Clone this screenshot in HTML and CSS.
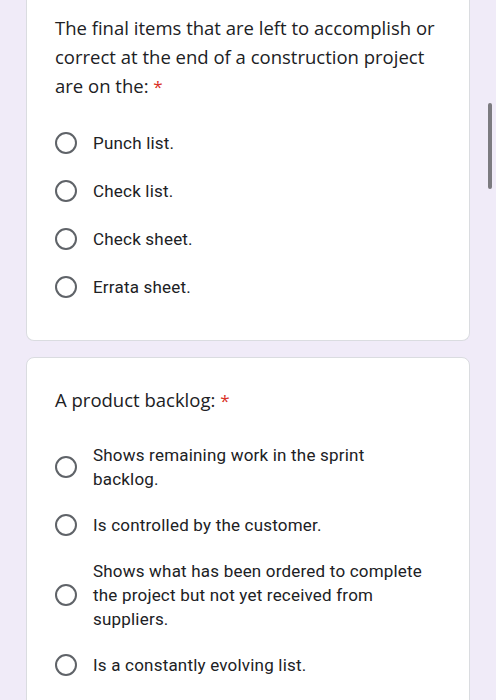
FILE: index.html
```html
<!DOCTYPE html>
<html lang="en">
<head>
    <meta charset="UTF-8">
    <meta name="viewport" content="width=device-width, initial-scale=1.0">
    <title>Quiz</title>

    <link rel="stylesheet" href="styles.css">

</head>
<body>

    <div class="page">
        <!-- Question 1 (scrolled, top of card is cut off) -->
        <div class="card card-cut">
            <div class="question">
                The final items that are left to accomplish or correct at the end of a construction project are on the: <span class="required">*</span>
            </div>
            <div class="options">
                <label class="option"><span class="radio"></span><span class="option-text">Punch list.</span></label>
                <label class="option"><span class="radio"></span><span class="option-text">Check list.</span></label>
                <label class="option"><span class="radio"></span><span class="option-text">Check sheet.</span></label>
                <label class="option"><span class="radio"></span><span class="option-text">Errata sheet.</span></label>
            </div>
        </div>

        <!-- Question 2 -->
        <div class="card">
            <div class="question">
                A product backlog: <span class="required">*</span>
            </div>
            <div class="options">
                <label class="option"><span class="radio"></span><span class="option-text">Shows remaining work in the sprint backlog.</span></label>
                <label class="option"><span class="radio"></span><span class="option-text">Is controlled by the customer.</span></label>
                <label class="option"><span class="radio"></span><span class="option-text">Shows what has been ordered to complete the project but not yet received from suppliers.</span></label>
                <label class="option"><span class="radio"></span><span class="option-text">Is a constantly evolving list.</span></label>
            </div>
        </div>
    </div>

    <div class="scrollbar"></div>

</body>
</html>
```

FILE: styles.css
```css
* {
    margin: 0;
    padding: 0;
    box-sizing: border-box;
}

body {
    min-height: 100vh;
    background: #f0ebf8;
    font-family: Roboto, "Liberation Sans", sans-serif;
    color: #202124;
    overflow: hidden;
}

.page {
    padding: 0 26px;
}

.card {
    background: white;
    border: 1px solid #dadce0;
    border-radius: 8px;
    padding: 27px 24px 29px 28px;
    margin-bottom: 16px;
}

.card-cut {
    border-top: none;
    border-top-left-radius: 0;
    border-top-right-radius: 0;
    padding-top: 13px;
}

.question {
    font-family: "Open Sans", sans-serif;
    font-size: 18.5px;
    line-height: 29px;
    color: #202124;
    margin-bottom: 18px;
}

.required {
    color: #d93025;
    font-size: 17px;
}

.option {
    display: flex;
    align-items: center;
    min-height: 48px;
    padding: 10px 0;
    gap: 16px;
}

.radio {
    flex: none;
    width: 22px;
    height: 22px;
    border: 2.5px solid #5f6368;
    border-radius: 50%;
}

.option-text {
    font-size: 17px;
    letter-spacing: 0.2px;
    line-height: 24px;
    padding-right: 22px;
}

.scrollbar {
    position: fixed;
    top: 103px;
    right: 4px;
    width: 4px;
    height: 86px;
    border-radius: 2px;
    background: #7c7b80;
}
```
